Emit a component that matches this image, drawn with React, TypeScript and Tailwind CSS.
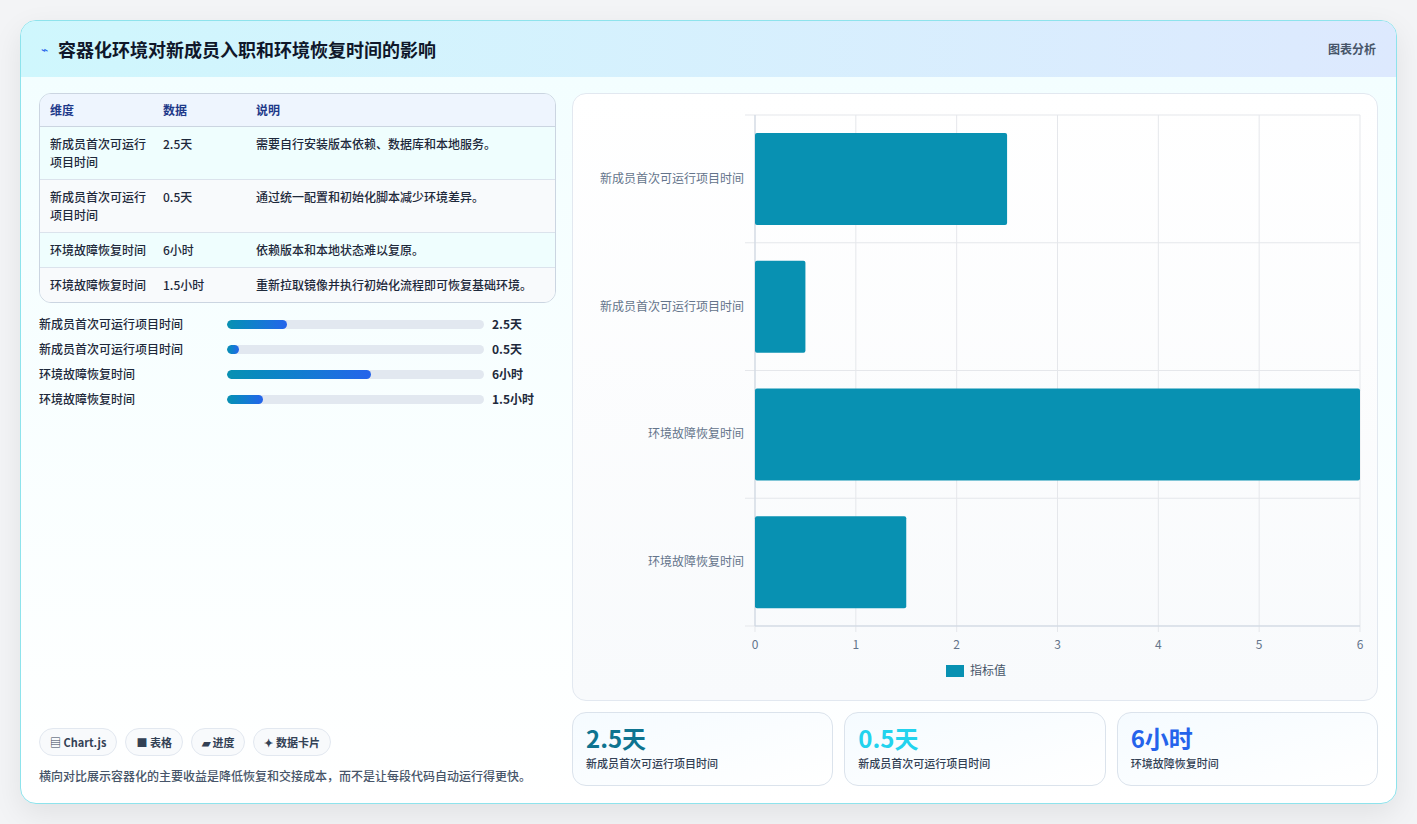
import React from "react";

const rows = [
  ["新成员首次可运行项目时间", "2.5天", "需要自行安装版本依赖、数据库和本地服务。"],
  ["新成员首次可运行项目时间", "0.5天", "通过统一配置和初始化脚本减少环境差异。"],
  ["环境故障恢复时间", "6小时", "依赖版本和本地状态难以复原。"],
  ["环境故障恢复时间", "1.5小时", "重新拉取镜像并执行初始化流程即可恢复基础环境。"],
];
const vals = [2.5, 0.5, 6, 1.5];

export default function App() {
  return (
    <div className="w-[1417px] h-[824px] bg-[#f3f4f6] pt-[20px] pl-[20px]" style={{ fontFamily: '"Noto Sans CJK SC", "Noto Sans", sans-serif' }}>
      <div className="w-[1377px] h-[784px] rounded-[16px] border border-[#8ee3ec] bg-gradient-to-b from-[#f2feff] to-white overflow-hidden shadow-[0_10px_30px_rgba(0,0,0,0.08)] flex flex-col">
        <div className="h-[56px] flex items-center justify-between px-[20px] bg-gradient-to-r from-[#cff7fd] to-[#dde9fe] shrink-0">
          <div className="flex items-center gap-[10px]">
            <span className="text-[#2563eb] text-[12px]">⌁</span>
            <span className="text-[18px] font-bold text-[#0f172a]">容器化环境对新成员入职和环境恢复时间的影响</span>
          </div>
          <span className="text-[12px] font-semibold text-[#475569]">图表分析</span>
        </div>
        <div className="flex gap-[16px] px-[18px] pt-[16px] pb-[17px] flex-1">
          <div className="w-[517px] flex flex-col">
            <div className="rounded-[12px] border border-[#cbd5e1] overflow-hidden text-[12px] text-[#1e293b]">
              <div className="flex h-[33px] items-center bg-[#eef5fe] border-b border-[#cbd5e1] font-semibold text-[#1e3a8a]">
                <div className="w-[123px] pl-[10px]">维度</div><div className="w-[93px]">数据</div><div>说明</div>
              </div>
              {rows.map((r, i) => (
                <div key={i} className={`flex py-[8px] leading-[18px] font-medium ${i % 2 === 0 ? "bg-[#effefe]" : "bg-[#f8fafc]"} ${i < 3 ? "border-b border-[#dbe3ec]" : ""}`}>
                  <div className="w-[123px] pl-[10px] pr-[8px]">{r[0]}</div><div className="w-[93px]">{r[1]}</div><div className="flex-1">{r[2]}</div>
                </div>
              ))}
            </div>
            <div className="mt-[12px] flex flex-col gap-[7px]">
              {rows.map((r, i) => (
                <div key={i} className="flex items-center h-[18px] text-[12px] font-medium text-[#1e293b]">
                  <div className="w-[188px]">{r[0]}</div>
                  <div className="w-[257px] h-[9px] rounded-full bg-[#e2e8f0] overflow-hidden">
                    <div className="h-full rounded-full bg-gradient-to-r from-[#0891b2] to-[#2563eb]" style={{ width: `${(vals[i] / 6) * 56 + (i === 1 ? 0 : 0)}%`, minWidth: 10 }} />
                  </div>
                  <div className="pl-[8px] font-bold">{r[1]}</div>
                </div>
              ))}
            </div>
            <div className="flex-1" />
            <div className="flex gap-[8px] text-[11px] font-bold text-[#334155]">
              {["▤ Chart.js", "■ 表格", "▰ 进度", "✦ 数据卡片"].map((c) => (
                <span key={c} className="h-[28px] px-[10px] flex items-center rounded-full border border-[#e2e8f0] bg-[#f8fafc]">{c}</span>
              ))}
            </div>
            <p className="mt-[10px] text-[12px] leading-[20px] font-medium text-[#475569]">横向对比展示容器化的主要收益是降低恢复和交接成本，而不是让每段代码自动运行得更快。</p>
          </div>
          <div className="flex-1 flex flex-col gap-[11px]">
            <div className="h-[608px] rounded-[14px] border border-[#e2e8f0] bg-gradient-to-b from-white to-[#f8fafc] relative">
              <Chart />
            </div>
            <div className="flex gap-[11px]">
              {[["2.5天", "text-[#0e7490]"], ["0.5天", "text-[#22d3ee]"], ["6小时", "text-[#2563eb]"]].map(([v, c], i) => (
                <div key={i} className="flex-1 h-[74px] rounded-[14px] border border-[#dbe3ec] bg-gradient-to-br from-[#f5fbff] to-white px-[13px] pt-[8px]">
                  <div className={`text-[24px] font-bold leading-[34px] ${c}`}>{v}</div>
                  <div className="text-[11px] font-medium text-[#334155]">{rows[i === 2 ? 2 : 0][0]}</div>
                </div>
              ))}
            </div>
          </div>
        </div>
      </div>
    </div>
  );
}

function Chart() {
  const x0 = 182, w = 605, y0 = 21, h = 511;
  const labels = rows.map((r) => r[0]);
  return (
    <svg width="806" height="608" className="absolute left-0 top-0" style={{ fontFamily: '"Noto Sans CJK SC", sans-serif' }}>
      {[0, 1, 2, 3, 4, 5, 6].map((k) => (
        <g key={k}>
          <line x1={x0 + (w / 6) * k} x2={x0 + (w / 6) * k} y1={y0} y2={y0 + h + 6} stroke="#e5e7eb" />
          <text x={x0 + (w / 6) * k} y={y0 + h + 23} fontSize="12" fill="#64748b" textAnchor="middle">{k}</text>
        </g>
      ))}
      {[0, 1, 2, 3, 4].map((k) => (
        <line key={k} x1={x0 - 10} x2={x0 + w} y1={y0 + (h / 4) * k} y2={y0 + (h / 4) * k} stroke="#e5e7eb" />
      ))}
      <line x1={x0} x2={x0} y1={y0} y2={y0 + h} stroke="#cbd5e1" />
      <line x1={x0} x2={x0 + w} y1={y0 + h} y2={y0 + h} stroke="#cbd5e1" />
      {vals.map((v, i) => {
        const cy = y0 + (h / 4) * i + h / 8;
        return (
          <g key={i}>
            <rect x={x0} y={cy - 46} width={(w / 6) * v} height={92} fill="#0891b2" rx="2" />
            <text x={x0 - 11} y={cy + 4} fontSize="12" fill="#64748b" textAnchor="end">{labels[i]}</text>
          </g>
        );
      })}
      <rect x="373" y="571" width="18" height="12" fill="#0891b2" />
      <text x="397" y="581" fontSize="12" fill="#475569">指标值</text>
    </svg>
  );
}
